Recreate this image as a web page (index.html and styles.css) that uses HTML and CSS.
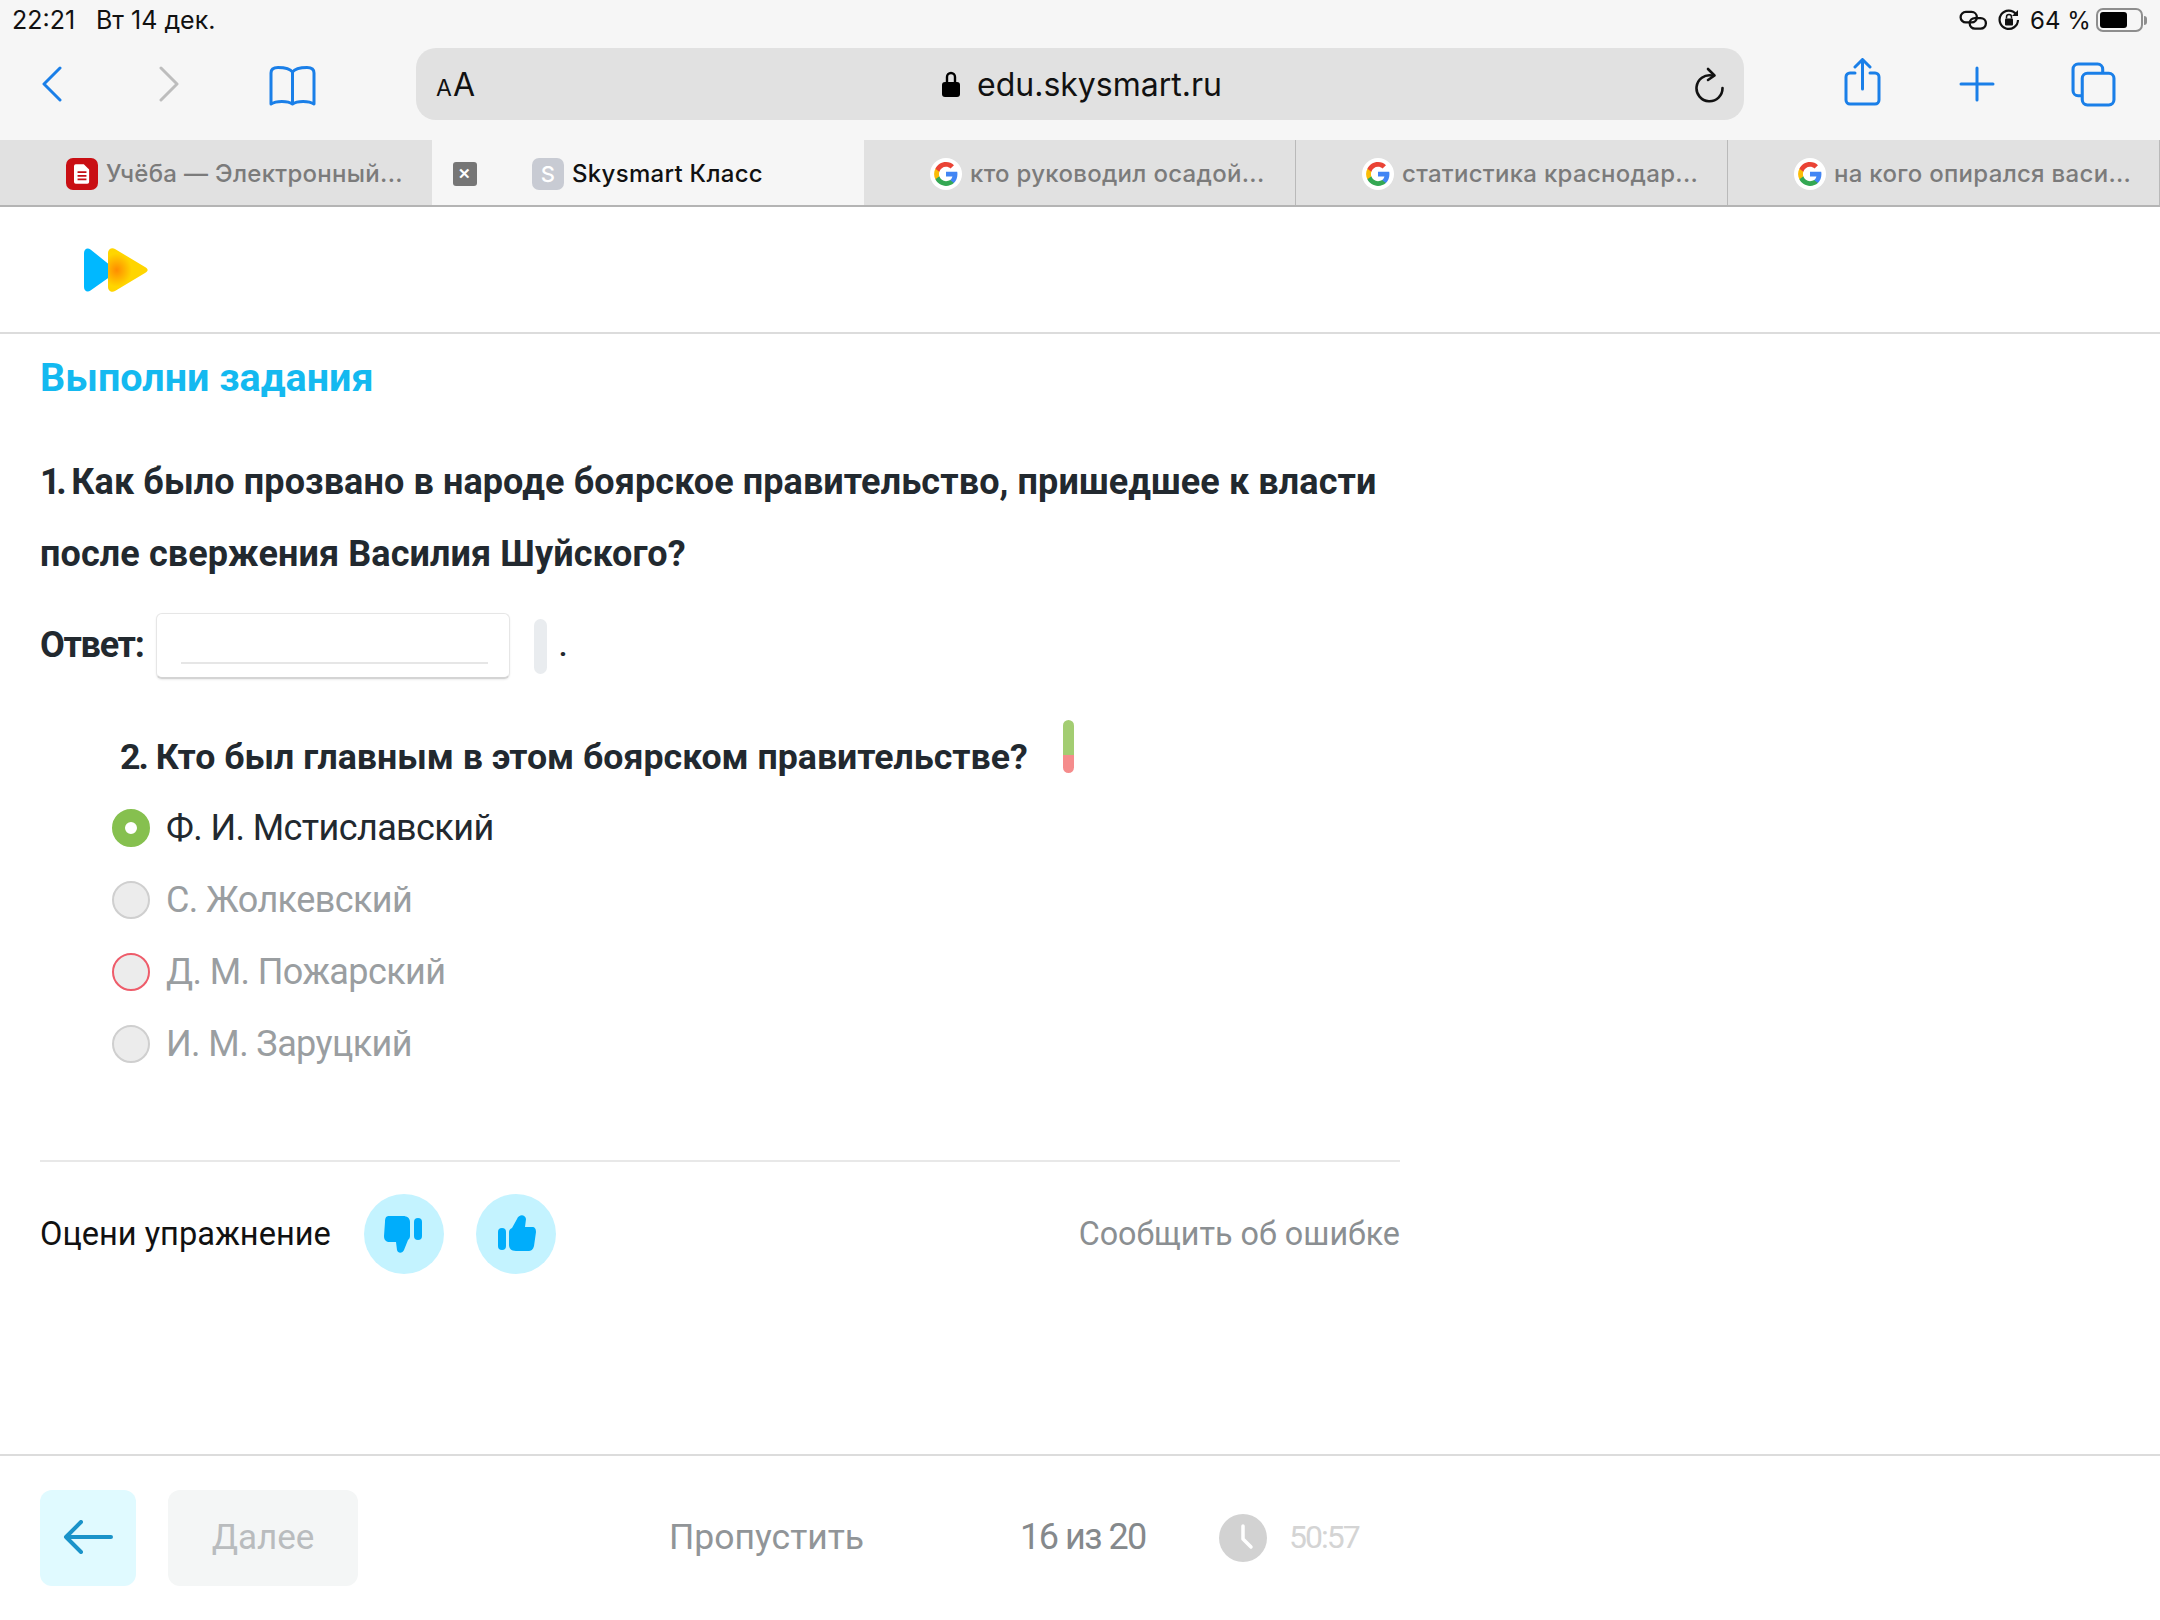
FILE: index.html
```html
<!DOCTYPE html>
<html lang="ru">
<head>
<meta charset="utf-8">
<title>Skysmart Класс</title>
<link rel="stylesheet" href="styles.css">
</head>
<body>
<svg class="defs" width="0" height="0" aria-hidden="true">
  <symbol id="g" viewBox="0 0 24 24">
    <path fill="#4285F4" d="M22.56 12.25c0-.78-.07-1.53-.2-2.25H12v4.26h5.92c-.26 1.37-1.04 2.53-2.21 3.31v2.77h3.57c2.08-1.92 3.28-4.74 3.28-8.09z"/>
    <path fill="#34A853" d="M12 23c2.97 0 5.46-.98 7.28-2.66l-3.57-2.77c-.98.66-2.23 1.06-3.71 1.06-2.86 0-5.29-1.93-6.16-4.53H2.18v2.84C3.99 20.53 7.7 23 12 23z"/>
    <path fill="#FBBC05" d="M5.84 14.09c-.22-.66-.35-1.36-.35-2.09s.13-1.43.35-2.09V7.07H2.18C1.43 8.55 1 10.22 1 12s.43 3.45 1.18 4.93l2.85-2.22.81-.62z"/>
    <path fill="#EA4335" d="M12 5.38c1.62 0 3.06.56 4.21 1.64l3.15-3.15C17.45 2.09 14.97 1 12 1 7.7 1 3.99 3.47 2.18 7.07l3.66 2.84c.87-2.6 3.3-4.53 6.16-4.53z"/>
  </symbol>
</svg>

<header class="browser">
  <div class="status">
    <span class="status-time">22:21</span>
    <span class="status-date">Вт 14 дек.</span>
    <span class="status-right">
      <svg class="st-link" viewBox="0 0 30 22" fill="none" stroke="#111" stroke-width="2.4"><rect x="1.5" y="2" width="17" height="11" rx="5.5"/><rect x="11" y="8.5" width="17" height="11" rx="5.5"/></svg>
      <svg class="st-lock" viewBox="0 0 22 22" fill="none"><path d="M18 5a9.2 9.2 0 1 0 2 6" stroke="#111" stroke-width="2.2"/><path d="M20 1v6h-6z" fill="#111"/><rect x="7" y="9.5" width="8" height="7" rx="1" fill="#111"/><path d="M8.5 9.5V8a2.5 2.5 0 0 1 5 0v1.500" stroke="#111" stroke-width="1.500"/></svg>
      <span class="st-pct">64 %</span>
      <span class="battery"><span class="battery-fill"></span></span>
      <span class="battery-nub"></span>
    </span>
  </div>

  <div class="toolbar">
    <svg class="ic ic-back" viewBox="0 0 20 36" fill="none" stroke="#1a7fe8" stroke-width="3" stroke-linecap="round" stroke-linejoin="round"><path d="M18 2 2 18l16 16"/></svg>
    <svg class="ic ic-fwd" viewBox="0 0 22 36" fill="none" stroke="#bdbdbd" stroke-width="3" stroke-linecap="round" stroke-linejoin="round"><path d="M3 2l16 16L3 34"/></svg>
    <svg class="ic ic-book" viewBox="0 0 47 40" fill="none" stroke="#1a7fe8" stroke-width="3" stroke-linejoin="round" stroke-linecap="round"><path d="M23.500 6C21 2.500 17 1.500 9 1.500 5 1.500 2 3 2 7v31c5-3.500 17-3.500 21.500 0 4.500-3.500 16.500-3.500 21.500 0V7c0-4-3-5.500-7-5.500C30 1.500 26 2.500 23.500 6zm0 0v30"/></svg>
    <div class="address">
      <span class="aa"><span class="aa-s">A</span>A</span>
      <span class="url">
        <svg class="lock" viewBox="0 0 18 26"><path d="M5 12V6a4 4 0 0 1 8 0v6" fill="none" stroke="#000" stroke-width="2.400"/><rect y="11" width="18" height="15" rx="3" fill="#000"/></svg>
        edu.skysmart.ru
      </span>
      <svg class="reload" viewBox="0 0 30 36" fill="none" stroke="#111" stroke-width="2.600" stroke-linecap="round" stroke-linejoin="round"><path d="M17 8.500A13 13 0 1 0 27.500 21"/><path d="M13 2l6.500 6.500L13 13"/></svg>
    </div>
    <svg class="ic ic-share" viewBox="0 0 37 48" fill="none" stroke="#1a7fe8" stroke-width="3" stroke-linecap="round" stroke-linejoin="round"><path d="M11 15H6a4 4 0 0 0-4 4v23a4 4 0 0 0 4 4h25a4 4 0 0 0 4-4V19a4 4 0 0 0-4-4h-5M18.500 31V2M11 9l7.500-7.500L26 9"/></svg>
    <svg class="ic ic-plus" viewBox="0 0 36 36" fill="none" stroke="#1a7fe8" stroke-width="3" stroke-linecap="round"><path d="M18 2v32M2 18h32"/></svg>
    <svg class="ic ic-tabs" viewBox="0 0 44 44" fill="none" stroke="#1a7fe8" stroke-width="3" stroke-linejoin="round"><path d="M11 33H7a5 5 0 0 1-5-5V7a5 5 0 0 1 5-5h19a5 5 0 0 1 5 5v4"/><rect x="11" y="11" width="31" height="31" rx="5"/></svg>
  </div>

  <nav class="tabs">
    <div class="tab">
      <span class="fav fav-doc"><svg viewBox="0 0 18 22" class="doc"><path d="M2 0h9l6 6v14a2 2 0 0 1-2 2H2a2 2 0 0 1-2-2V2a2 2 0 0 1 2-2z" fill="#fff"/><path d="M4 9h10M4 13h10M4 17h10" stroke="#c40f14" stroke-width="2"/></svg></span>
      <span class="tab-label">Учёба — Электронный...</span>
    </div>
    <div class="tab tab-active">
      <span class="tab-close">✕</span>
      <span class="fav fav-s">S</span>
      <span class="tab-label">Skysmart Класс</span>
    </div>
    <div class="tab tab-g">
      <span class="fav fav-g"><svg class="g"><use href="#g"/></svg></span>
      <span class="tab-label">кто руководил осадой...</span>
    </div>
    <div class="tab tab-g">
      <span class="fav fav-g"><svg class="g"><use href="#g"/></svg></span>
      <span class="tab-label">статистика краснодар...</span>
    </div>
    <div class="tab tab-g">
      <span class="fav fav-g"><svg class="g"><use href="#g"/></svg></span>
      <span class="tab-label">на кого опирался васи...</span>
    </div>
  </nav>
</header>

<div class="site-head">
  <svg class="logo" viewBox="0 0 64 44">
    <defs>
      <radialGradient id="lg" cx="0.22" cy="0.5" r="0.38">
        <stop offset="0" stop-color="#ff8c00"/>
        <stop offset="1" stop-color="#ffd500"/>
      </radialGradient>
    </defs>
    <path d="M0 5c0-4 3.500-6 6.500-3.500L27 18v10L6.500 42.500C3.500 45 0 43 0 39z" fill="#00b8ff"/>
    <path d="M24 5c0-4 4-6 7-4l30 18c3.500 2 3.500 4 0 6L31 43c-3 2-7 0-7-4z" fill="url(#lg)"/>
  </svg>
</div>

<main class="content">
  <h1 class="title">Выполни задания</h1>
  <p class="q1"><span class="num-1">1.</span> Как было прозвано в народе боярское правительство, пришедшее к власти<br>после свержения Василия Шуйского?</p>
  <div class="answer">
    <span class="answer-label">Ответ:</span>
    <span class="answer-input"><span class="answer-line"></span></span>
    <span class="answer-pill"></span>
    <span class="answer-dot">.</span>
  </div>
  <div class="q2">
    <span><span class="num-2">2.</span> Кто был главным в этом боярском правительстве?</span>
    <span class="q2-pill"></span>
  </div>
  <ul class="options">
    <li class="opt opt-on"><span class="radio radio-on"></span>Ф. И. Мстиславский</li>
    <li class="opt"><span class="radio"></span>С. Жолкевский</li>
    <li class="opt"><span class="radio radio-bad"></span>Д. М. Пожарский</li>
    <li class="opt"><span class="radio"></span>И. М. Заруцкий</li>
  </ul>
  <div class="rate">
    <span class="rate-label">Оцени упражнение</span>
    <span class="rate-btn">
      <svg viewBox="0 0 80 80"><rect x="50" y="24" width="8" height="22" rx="4" fill="#00adfb"/><path d="M25 22h14c4 0 7 2 7 6v14c0 2-1 3-2 4l-4 10c-1 3-6 4-7 0l-1-8h-6c-4 0-6-2-6-6l1-14c0-4 1-6 4-6z" fill="#00adfb"/></svg>
    </span>
    <span class="rate-btn">
      <svg viewBox="0 0 80 80"><rect x="22" y="34" width="8" height="22" rx="4" fill="#00adfb"/><path d="M33 38c0-2 1-3 3-4l5-9c2-5 8-5 9 0l-1 8h7c3 0 4 2 4 5l-2 14c-1 4-3 5-6 5H40c-5 0-7-3-7-6z" fill="#00adfb"/></svg>
    </span>
    <span class="report">Сообщить об ошибке</span>
  </div>
</main>

<footer class="foot">
  <span class="btn-back">
    <svg viewBox="0 0 50 34" fill="none" stroke="#1a93c9" stroke-width="4" stroke-linecap="round" stroke-linejoin="round"><path d="M48 17H3M18 2 3 17l15 15"/></svg>
  </span>
  <span class="btn-next">Далее</span>
  <span class="skip">Пропустить</span>
  <span class="count">16 из 20</span>
  <svg class="clock" viewBox="0 0 48 48"><circle cx="24" cy="24" r="24" fill="#d2d2d2"/><path d="M24 12v13l8 8" fill="none" stroke="#fff" stroke-width="3.500" stroke-linecap="round" stroke-linejoin="round"/></svg>
  <span class="timer">50:57</span>
</footer>
</body>
</html>
```
FILE: styles.css
```css
* { box-sizing: border-box; }
html, body { margin: 0; padding: 0; }
body {
  width: 2160px;
  height: 1620px;
  overflow: hidden;
  background: #fff;
  display: flex;
  flex-direction: column;
  font-family: "Roboto", "Liberation Sans", sans-serif;
  color: #22292f;
}
.defs { display: block; height: 0; }

/* browser chrome */
.browser { background: #f6f6f6; font-family: "Inter", "Roboto", sans-serif; flex: none; }
.status {
  height: 40px;
  display: flex;
  align-items: center;
  padding: 0 13px 0 12px;
  font-size: 25px;
  color: #111;
}
.status-time { width: 84px; }
.status-right { margin-left: auto; display: flex; align-items: center; }
.st-link { width: 29px; height: 21px; margin-right: 10px; }
.st-lock { width: 22px; height: 22px; margin-right: 10px; }
.st-pct { width: 66px; font-size: 24px; }
.battery {
  width: 47px; height: 24px; border: 2px solid #8e8e8e; border-radius: 7px; padding: 2px; display: block;
}
.battery-fill { display: block; width: 27px; height: 16px; background: #000; border-radius: 3px; }
.battery-nub { width: 3px; height: 9px; background: #8e8e8e; border-radius: 0 3px 3px 0; margin-left: 1px; }

.toolbar { height: 100px; display: flex; align-items: center; position: relative; padding-bottom: 12px; }
.ic { flex: none; display: block; }
.ic-back { width: 20px; height: 36px; margin-left: 42px; }
.ic-fwd { width: 22px; height: 36px; margin-left: 96px; }
.ic-book { width: 47px; height: 40px; margin-left: 89px; margin-top: 4px; }
.address {
  width: 1328px; height: 72px; margin-left: 100px; background: #e1e1e1; border-radius: 20px;
  display: flex; align-items: center; position: relative; padding-left: 20px;
}
.aa { font-size: 32px; color: #111; width: 506px; }
.aa-s { font-size: 23px; margin-right: 1px; }
.url { display: flex; align-items: center; font-size: 32px; color: #111; font-weight: 400; }
.lock { width: 18px; height: 26px; margin-right: 17px; }
.reload { width: 30px; height: 36px; margin-left: auto; margin-right: 19px; margin-top: 2px; }
.ic-share { width: 37px; height: 48px; margin-left: 100px; margin-top: -4px; }
.ic-plus { width: 36px; height: 36px; margin-left: 78px; }
.ic-tabs { width: 45px; height: 45px; margin-left: 76px; }

.tabs { height: 67px; display: flex; border-bottom: 2px solid #b4b4b4; background: #e1e1e1; }
.tab {
  width: 432px; display: flex; align-items: center; padding: 2px 0 0 66px; font-size: 24px; letter-spacing: .3px; color: #7b7b7b; font-weight: 500;
  border-right: 1px solid #b9b9b9;
}
.tab:first-child { border-right: 0; }
.tab-active { background: #f6f6f6; padding-left: 21px; color: #111; border-right: 0; }
.tab-label { white-space: nowrap; margin-left: -1px; }
.fav { width: 32px; height: 32px; flex: none; border-radius: 7px; margin-right: 9px; display: flex; align-items: center; justify-content: center; }
.fav-doc { background: #c90f14; }
.doc { width: 16px; height: 20px; }
.fav-s { background: #c8cbd3; color: #fff; font-size: 22px; }
.fav-g { background: #fff; border-radius: 50%; }
.g { width: 26px; height: 26px; display: block; }
.tab-close {
  width: 24px; height: 24px; background: #767676; border-radius: 3px; color: #fff; font-size: 15px; font-weight: 700;
  display: flex; align-items: center; justify-content: center; margin-right: 55px;
}

/* site header */
.site-head { height: 127px; flex: none; border-bottom: 2px solid #dcdcdc; display: flex; align-items: center; padding-left: 84px; }
.logo { width: 64px; height: 44px; display: block; }

/* content */
.content { flex: 1; padding: 20px 0 0 40px; width: 1400px; min-height: 0; }
.title { margin: 0; font-size: 39.5px; line-height: 48px; font-weight: 700; color: #14b9f0; }
.q1 { margin: 44px 0 0; font-size: 36px; line-height: 72px; font-weight: 700; letter-spacing: .1px; white-space: nowrap; }
.num-1 { letter-spacing: -4.5px; }
.num-2 { letter-spacing: -2px; }
.answer { margin-top: 23px; height: 66px; display: flex; align-items: center; font-size: 36px; font-weight: 700; }
.answer-label { width: 116px; letter-spacing: -1.3px; margin-top: -2px; }
.answer-input {
  width: 354px; height: 66px; border: 1px solid #e6e6e6; border-bottom: 2px solid #d4d4d4; border-radius: 6px; background: #fff;
  box-shadow: 0 1px 2px rgba(0,0,0,.08); padding: 0 21px 0 24px; display: flex; align-items: flex-end;
}
.answer-line { display: block; width: 100%; height: 2px; background: #e6e6e6; margin-bottom: 13px; }
.answer-pill { width: 13px; height: 55px; background: #e9ecef; border-radius: 7px; margin-left: 24px; }
.answer-dot { margin-left: 12px; font-size: 28px; }
.q2 { margin: 42px 0 0 80px; height: 71px; display: flex; align-items: center; font-size: 35.7px; font-weight: 700; line-height: 72px; white-space: nowrap; }
.q2-pill { width: 11px; height: 53px; margin: -20px 0 0 35px; border-radius: 6px; background: linear-gradient(#a3cd72 0, #a3cd72 66%, #f58c8c 66%, #f58c8c 100%); }
.options { list-style: none; margin: 0 0 0 72px; padding: 0; }
.opt { height: 72px; display: flex; align-items: center; font-size: 36px; letter-spacing: -.6px; color: #9a9ea1; white-space: nowrap; }
.opt-on { color: #22292f; }
.radio { width: 38px; height: 38px; border-radius: 50%; background: #ececec; border: 2px solid #cfcfcf; margin-right: 16px; flex: none; }
.radio-on { background: #fff; border: 13px solid #86c04f; }
.radio-bad { border-color: #ee5c6a; }
.rate { margin-top: 80px; border-top: 2px solid #e8e8e8; padding-top: 32px; display: flex; align-items: center; }
.rate-label { font-size: 32.6px; color: #111; width: 324px; white-space: nowrap; }
.rate-btn { width: 80px; height: 80px; border-radius: 50%; background: #c4f3ff; margin-right: 32px; flex: none; }
.rate-btn svg { display: block; width: 80px; height: 80px; }
.report { margin-left: auto; font-size: 32.3px; color: #8b8f92; white-space: nowrap; }

/* footer */
.foot { height: 166px; flex: none; border-top: 2px solid #dcdcdc; display: flex; align-items: center; padding: 0 0 0 40px; margin-top: 0; }
.btn-back { width: 96px; height: 96px; background: #e0faff; border-radius: 12px; display: flex; align-items: center; justify-content: center; }
.btn-back svg { width: 50px; height: 34px; margin-top: -2px; }
.btn-next { width: 190px; height: 96px; margin-left: 32px; padding-bottom: 2px; background: #f4f6f6; border-radius: 12px; display: flex; align-items: center; justify-content: center; font-size: 35px; color: #b9bcbe; }
.skip { margin: 0 0 2px 311px; font-size: 35.5px; color: #919598; width: 351px; white-space: nowrap; }
.count { margin-bottom: 2px; font-size: 36px; letter-spacing: -1.5px; color: #85898c; width: 199px; white-space: nowrap; }
.clock { width: 48px; height: 48px; margin-right: 22px; }
.timer { margin-bottom: 2px; font-size: 32px; letter-spacing: -2px; color: #d4d4d4; }
```
